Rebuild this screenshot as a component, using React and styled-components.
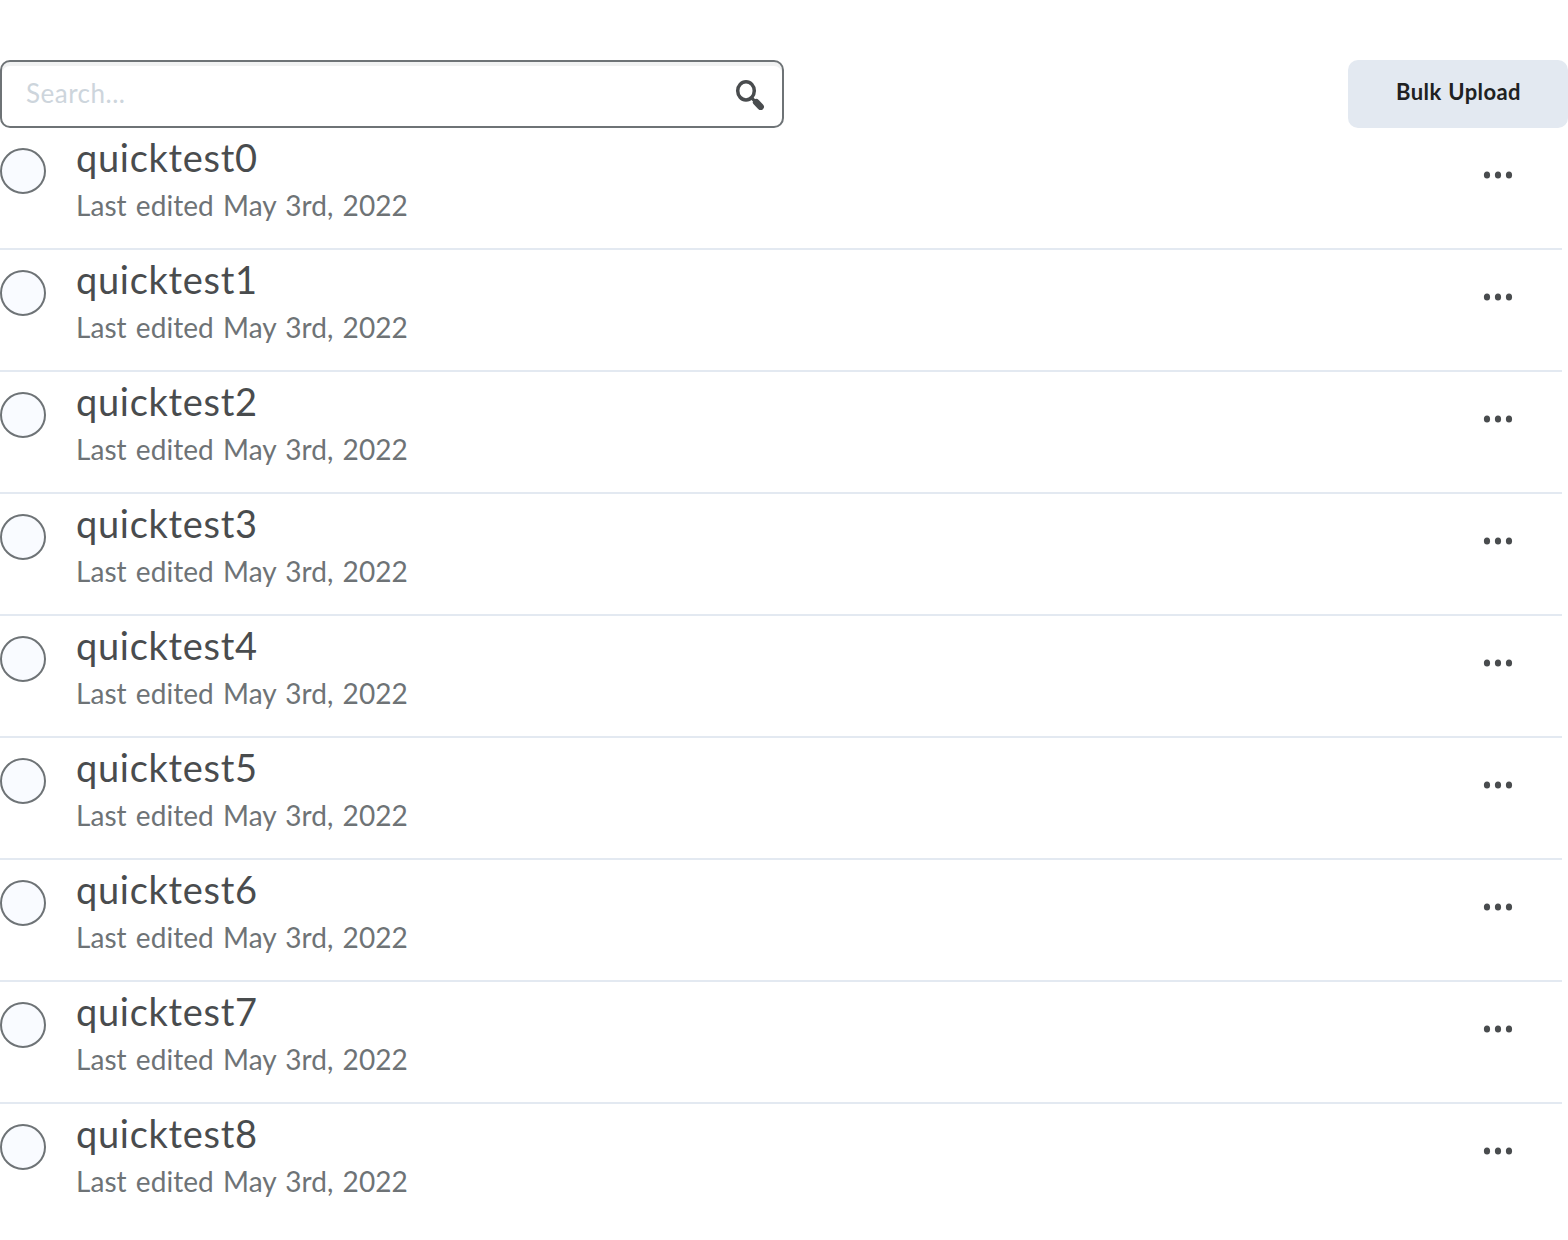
import React from 'react';
import styled, { createGlobalStyle } from 'styled-components';

const Global = createGlobalStyle`
  *, *::before, *::after { box-sizing: border-box; }
  body { margin: 0; background: #fff; font-family: Lato, sans-serif; }
`;
const Page = styled.main`
  padding-top: 60px;
  height: 1240px;
  overflow: hidden;
`;
const Toolbar = styled.header`
  display: flex;
  justify-content: space-between;
  height: 68px;
`;
const SearchBox = styled.label`
  display: flex;
  align-items: center;
  width: 784px;
  padding: 0 16px 0 24px;
  border: 2px solid #6e7376;
  border-radius: 10px;
  box-shadow: inset 0 4px 0 #f1f2f2;
`;
const SearchInput = styled.input`
  flex: 1;
  min-width: 0;
  padding: 0 0 2px;
  border: 0;
  outline: 0;
  background: transparent;
  font: 400 26px/32px Lato, sans-serif;
  letter-spacing: 0.5px;
  &::placeholder { color: #cdd5dc; opacity: 1; }
`;
const UploadButton = styled.button`
  width: 220px;
  padding: 0 0 4px 1px;
  border: 0;
  border-radius: 10px;
  background: #e3e9f1;
  color: #202122;
  font: 700 22px/28px Lato, sans-serif;
  letter-spacing: 0.4px;
  word-spacing: 1px;
`;
const List = styled.ul`
  margin: 0;
  padding: 0 6px 0 0;
  list-style: none;
`;
const Row = styled.li`
  display: flex;
  height: 122px;
  border-bottom: 2px solid #e3e9f1;
  &:last-child { border-bottom: 0; }
`;
const Radio = styled.button`
  width: 46px;
  height: 46px;
  margin: 20px 30px 0 0;
  padding: 0;
  border: 2px solid #6e7376;
  border-radius: 50%;
  background: #f9fbff;
`;
const Details = styled.div`
  flex: 1;
  padding-top: 5px;
`;
const Title = styled.h2`
  margin: 0;
  color: #494c4e;
  font-size: 38px;
  font-weight: 400;
  line-height: 48px;
  letter-spacing: 0.7px;
`;
const Edited = styled.p`
  margin: 0;
  color: #6e7376;
  font-size: 28px;
  line-height: 48px;
  letter-spacing: 0.05px;
  word-spacing: 2px;
`;
const MenuButton = styled.button`
  display: flex;
  width: 30px;
  height: 8px;
  margin: 43px 49px 0 0;
  padding: 0;
  border: 0;
  background: none;
`;

const items = Array.from({ length: 9 }, (_, i) => `quicktest${i}`);

export default function App() {
  return (
    <Page>
      <Global />
      <Toolbar>
        <SearchBox>
          <SearchInput placeholder="Search..." />
          <svg width="32" height="32" viewBox="0 0 32 32" fill="none" stroke="#494c4e" strokeLinecap="round">
            <ellipse cx="12" cy="12.8" rx="8.3" ry="9.1" strokeWidth="3.5" />
            <path d="M17.8 20l3 3.2" strokeWidth="3.2" />
            <path d="M22.3 24.2l4.3 4.6" strokeWidth="6.6" />
          </svg>
        </SearchBox>
        <UploadButton>Bulk Upload</UploadButton>
      </Toolbar>
      <List>
        {items.map((name) => (
          <Row key={name}>
            <Radio aria-label={name} />
            <Details>
              <Title>{name}</Title>
              <Edited>Last edited May 3rd, 2022</Edited>
            </Details>
            <MenuButton aria-label="Options">
              <svg width="30" height="8" viewBox="0 0 30 8" fill="#494c4e">
                <ellipse cx="4" cy="4" rx="3.1" ry="3.5" />
                <ellipse cx="15" cy="4" rx="3.1" ry="3.5" />
                <ellipse cx="26" cy="4" rx="3.1" ry="3.5" />
              </svg>
            </MenuButton>
          </Row>
        ))}
      </List>
    </Page>
  );
}
